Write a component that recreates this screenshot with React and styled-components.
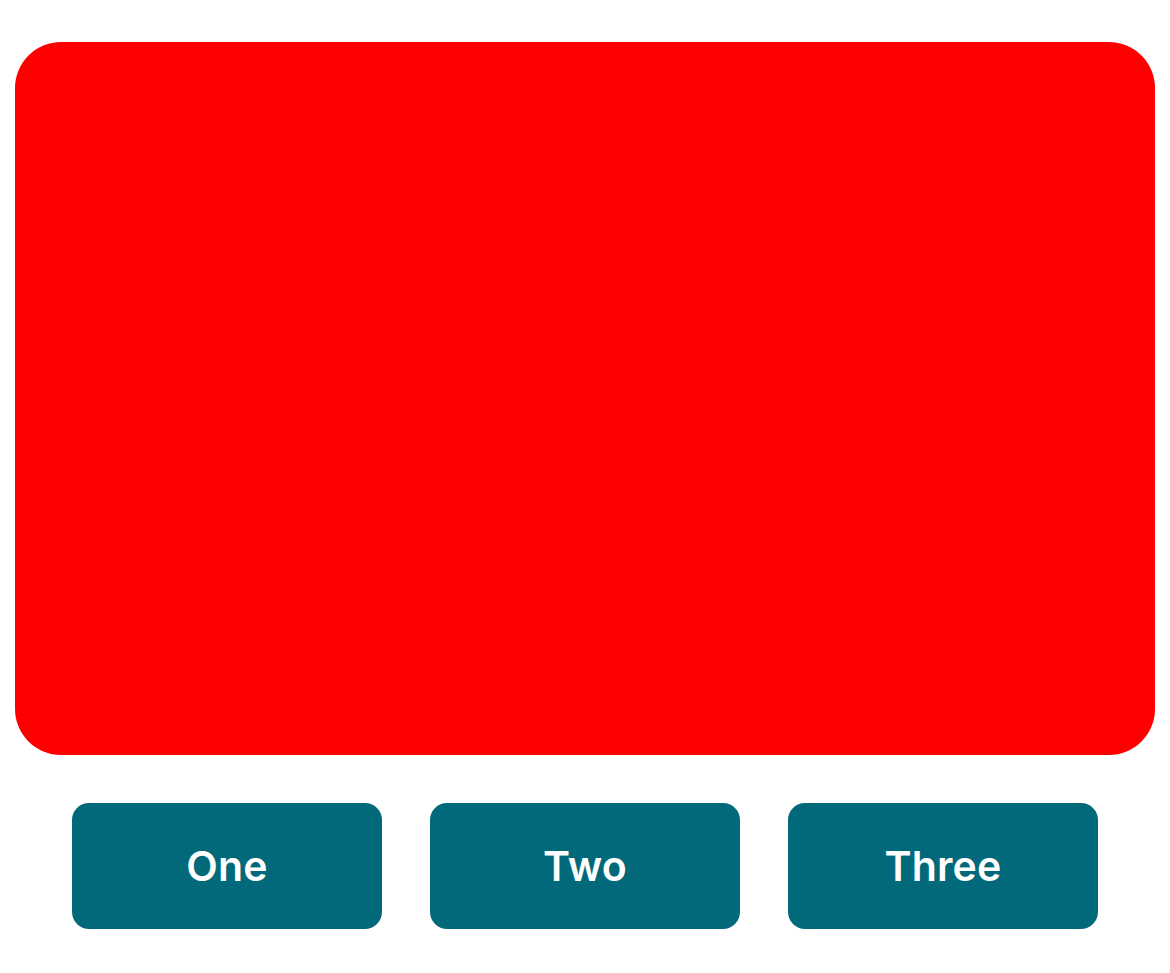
import React from "react";
import styled, { createGlobalStyle } from "styled-components";

const Global = createGlobalStyle`
  html, body { margin: 0; padding: 0; background: #ffffff; }
  body { font-family: Inter, "Noto Sans", sans-serif; }
`;

const Page = styled.div`
  display: flex;
  flex-direction: column;
  align-items: center;
  padding: 42px 15px 0;
  gap: 48px;
  box-sizing: border-box;
  width: 1170px;
`;

const Hero = styled.div`
  width: 100%;
  height: 713px;
  background: #ff0000;
  border-radius: 46px;
`;

const Row = styled.div`
  display: flex;
  gap: 48px;
  justify-content: center;
`;

const Button = styled.button`
  width: 310px;
  height: 126px;
  border: none;
  border-radius: 17px;
  background: #02697a;
  color: #ffffff;
  font-family: Inter, "Noto Sans", sans-serif;
  font-weight: 600;
  font-size: 41px;
  letter-spacing: 0.2px;
  display: flex;
  align-items: center;
  justify-content: center;
  padding: 0;
  cursor: pointer;
`;

export default function App() {
  return (
    <>
      <Global />
      <Page>
        <Hero />
        <Row>
          {["One", "Two", "Three"].map((t) => (
            <Button key={t}>{t}</Button>
          ))}
        </Row>
      </Page>
    </>
  );
}
